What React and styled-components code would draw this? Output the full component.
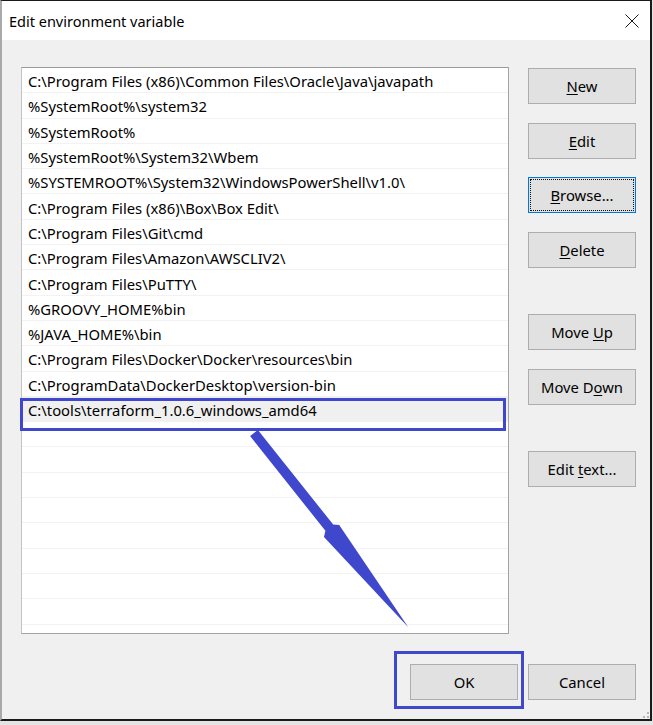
import React from "react";
import styled, { createGlobalStyle } from "styled-components";

const GlobalStyle = createGlobalStyle`
  html, body {
    margin: 0;
    padding: 0;
    background: #e4e4e4;
  }
  body {
    font-family: "Noto Sans", "Open Sans", Arial, sans-serif;
    color: #000;
  }
`;

const paths = [
  "C:\\Program Files (x86)\\Common Files\\Oracle\\Java\\javapath",
  "%SystemRoot%\\system32",
  "%SystemRoot%",
  "%SystemRoot%\\System32\\Wbem",
  "%SYSTEMROOT%\\System32\\WindowsPowerShell\\v1.0\\",
  "C:\\Program Files (x86)\\Box\\Box Edit\\",
  "C:\\Program Files\\Git\\cmd",
  "C:\\Program Files\\Amazon\\AWSCLIV2\\",
  "C:\\Program Files\\PuTTY\\",
  "%GROOVY_HOME%bin",
  "%JAVA_HOME%\\bin",
  "C:\\Program Files\\Docker\\Docker\\resources\\bin",
  "C:\\ProgramData\\DockerDesktop\\version-bin",
  "C:\\tools\\terraform_1.0.6_windows_amd64",
];

const SELECTED = 13;
const TOTAL_ROWS = 23;

function App() {
  const rows = [];
  for (let i = 0; i < TOTAL_ROWS; i++) {
    rows.push(
      <Row key={i} $selected={i === SELECTED}>
        {paths[i] || ""}
      </Row>
    );
  }

  return (
    <>
      <GlobalStyle />
      <Dialog>
        <TitleBar>
          <Title>Edit environment variable</Title>
          <CloseButton>
            <svg width="14" height="14" viewBox="0 0 14 14">
              <path d="M0.5 0.5 L13.5 13.5 M13.5 0.5 L0.5 13.5" stroke="#1a1a1a" strokeWidth="1" fill="none" />
            </svg>
          </CloseButton>
        </TitleBar>
        <Body>
          <Main>
            <ListBox>
              <Rows>{rows}</Rows>
              <Annotation $left={-2} $top={330} $width={486} $height={33} />
            </ListBox>
            <SideButtons>
              <Button>
                <span><u>N</u>ew</span>
              </Button>
              <Button>
                <span><u>E</u>dit</span>
              </Button>
              <Button $focused>
                <span><u>B</u>rowse...</span>
              </Button>
              <Button>
                <span><u>D</u>elete</span>
              </Button>
              <Button $spaced>
                <span>Move <u>U</u>p</span>
              </Button>
              <Button>
                <span>Move D<u>o</u>wn</span>
              </Button>
              <Button $spaced>
                <span>Edit <u>t</u>ext...</span>
              </Button>
            </SideButtons>
          </Main>
          <Footer>
            <OkWrap>
              <Button>
                <span>OK</span>
              </Button>
              <Annotation $left={-16} $top={-13} $width={130} $height={58} />
            </OkWrap>
            <Button>
              <span>Cancel</span>
            </Button>
          </Footer>
        </Body>
        <Grip>
          <svg width="6" height="6" viewBox="0 0 6 6">
            <rect x="4" y="0" width="2" height="2" fill="#b5b5b5" />
            <rect x="4" y="4" width="2" height="2" fill="#b5b5b5" />
            <rect x="0" y="4" width="2" height="2" fill="#b5b5b5" />
          </svg>
        </Grip>
        <ArrowLayer width="652" height="721" viewBox="0 0 652 721">
          <polygon
            points="257.9,429.9 333.2,524.6 339.2,525 408.3,627.2 324,537.1 325.4,530.8 250.1,436.1"
            fill="#3f47cc"
          />
        </ArrowLayer>
      </Dialog>
    </>
  );
}

export default App;

const Dialog = styled.div`
  position: relative;
  width: 652px;
  height: 721px;
  box-sizing: border-box;
  background: #f0f0f0;
  border-top: 1px solid #1a1a1a;
  border-right: 2px solid #1a1a1a;
  border-bottom: 2px solid #1a1a1a;
  border-left: 2px solid #a9a9a9;
  display: flex;
  flex-direction: column;
`;

const TitleBar = styled.div`
  height: 39px;
  background: #fff;
  display: flex;
  align-items: center;
  justify-content: space-between;
  padding: 0 11px 0 7px;
  flex-shrink: 0;
`;

const Title = styled.div`
  font-size: 14.5px;
  color: #000;
  padding-top: 1px;
`;

const CloseButton = styled.div`
  display: flex;
  align-items: center;
  padding-top: 1px;
`;

const Body = styled.div`
  flex: 1;
  display: flex;
  flex-direction: column;
  padding: 27px 14px 0 19px;
`;

const Main = styled.div`
  display: flex;
  gap: 19px;
  align-items: flex-start;
`;

const ListBox = styled.div`
  position: relative;
  width: 488px;
  height: 567px;
  box-sizing: border-box;
  background: #fff;
  border: 1px solid #a0a3a8;
  border-top-color: #9a9a9a;
  border-left-color: #c4c4c4;
`;

const Rows = styled.div`
  height: 100%;
  overflow: hidden;
  display: flex;
  flex-direction: column;
`;

const Row = styled.div`
  height: 25.3px;
  flex-shrink: 0;
  box-sizing: border-box;
  display: flex;
  align-items: center;
  padding: 2px 0 0 6px;
  font-size: 14.8px;
  color: #000;
  white-space: nowrap;
  background: ${(p) => (p.$selected ? "#f0f0f0" : "#fff")};
  border-bottom: 1px solid #f2f2f2;
  overflow: hidden;
`;

const Annotation = styled.div`
  position: absolute;
  left: ${(p) => p.$left}px;
  top: ${(p) => p.$top}px;
  width: ${(p) => p.$width}px;
  height: ${(p) => p.$height}px;
  box-sizing: border-box;
  border: 3px solid #3f47cc;
  pointer-events: none;
`;

const SideButtons = styled.div`
  display: flex;
  flex-direction: column;
  gap: 18.5px;
  padding-top: 1px;
`;

const Button = styled.div`
  position: relative;
  width: 108px;
  height: 36px;
  box-sizing: border-box;
  background: #e1e1e1;
  border: 1px solid ${(p) => (p.$focused ? "#0078d7" : "#adadad")};
  display: flex;
  align-items: center;
  justify-content: center;
  font-size: 14.8px;
  color: #000;
  white-space: nowrap;
  margin-top: ${(p) => (p.$spaced ? "28px" : "0")};
  u {
    text-decoration-thickness: 1px;
    text-underline-offset: 2px;
  }
  ${(p) =>
    p.$focused &&
    `
    &::after {
      content: "";
      position: absolute;
      inset: 1px;
      border: 1px dotted #111;
    }
  `}
`;

const Footer = styled.div`
  display: flex;
  justify-content: flex-end;
  gap: 10px;
  margin-top: 30px;
`;

const OkWrap = styled.div`
  position: relative;
`;

const Grip = styled.div`
  position: absolute;
  right: 1px;
  bottom: 1px;
  line-height: 0;
`;

const ArrowLayer = styled.svg`
  position: absolute;
  left: -2px;
  top: -1px;
  pointer-events: none;
`;
